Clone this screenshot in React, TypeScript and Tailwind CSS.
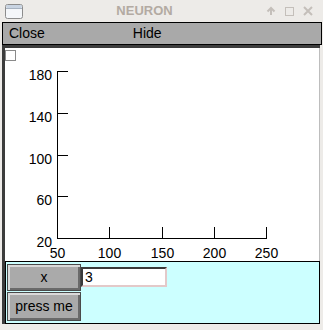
const yTicks = [
  { v: "180", y: 71.5 },
  { v: "140", y: 113.5 },
  { v: "100", y: 155.5 },
  { v: "60", y: 196.5 },
  { v: "20", y: 238.5 },
];

const xTicks = [
  { v: "50", x: 57.5 },
  { v: "100", x: 109.5 },
  { v: "150", x: 162.5 },
  { v: "200", x: 214.5 },
  { v: "250", x: 266.5 },
];

function TitleBar() {
  return (
    <div className="flex h-[22px] items-center">
      <svg width="18" height="15" viewBox="0 0 18 15" className="ml-[5px] shrink-0">
        <rect x="0.5" y="0.5" width="17" height="14" rx="2" fill="#f4f6f9" stroke="#8c8c8c" />
        <rect x="1" y="1" width="16" height="3" rx="1.5" fill="#c9d4e2" />
        <line x1="1" y1="4.5" x2="17" y2="4.5" stroke="#a7b2c0" />
      </svg>
      <div className="flex-1 text-center text-[13px] font-bold leading-[22px] text-[#b3aaa2]">NEURON</div>
      <div className="mr-[10px] flex items-center gap-[9px] text-[#c4bfba]">
        <svg width="10" height="10" viewBox="0 0 10 10">
          <path d="M5 9V2M1.5 5.5L5 2l3.5 3.5" fill="none" stroke="currentColor" strokeWidth="2" />
        </svg>
        <svg width="9" height="9" viewBox="0 0 9 9">
          <rect x="0.5" y="0.5" width="8" height="8" fill="none" stroke="currentColor" />
        </svg>
        <svg width="10" height="10" viewBox="0 0 10 10">
          <path d="M1 1l8 8M9 1l-8 8" fill="none" stroke="currentColor" strokeWidth="2" />
        </svg>
      </div>
    </div>
  );
}

function MotifButton({ label, h }: { label: string; h: string }) {
  return (
    <button
      className={`flex w-[74px] ${h} items-center justify-center border border-[#4a4a4a] bg-[#aaaaaa] text-[14px] text-black shadow-[inset_2px_2px_0_#dadada,inset_-2px_-2px_0_#6a6a6a]`}
    >
      {label}
    </button>
  );
}

export default function App() {
  return (
    <div className="h-[330px] w-[323px] overflow-hidden bg-[#edebe8] font-['Liberation_Sans',Arial,sans-serif]">
      <TitleBar />

      {/* menu bar */}
      <div className="ml-[2px] flex h-[23px] w-[320px] border border-black bg-[#a9a9a9] text-[14px] leading-[21px] text-black">
        <span className="ml-[6px]">Close</span>
        <span className="ml-[88px]">Hide</span>
      </div>

      <div className="ml-[2px] w-[318px] border-l-[3px] border-t-[3px] border-[#3c3c3c]">
        {/* graph canvas */}
        <div className="relative h-[213px] border-r border-[#bdbdbd] bg-white">
          <div className="absolute left-0 top-[2px] h-[11px] w-[11px] border border-[#8a8a8a] bg-white" />
          <svg width="313" height="213" className="block">
            <g transform="translate(-5,-48)" fontFamily="Liberation Sans, Arial, sans-serif" fontSize="14" fill="black">
              <line x1="57.5" y1="71" x2="57.5" y2="239" stroke="black" />
              <line x1="57" y1="238.5" x2="267" y2="238.5" stroke="black" />
              {yTicks.map((t) => (
                <g key={t.v}>
                  <line x1="57" y1={t.y} x2="68" y2={t.y} stroke="black" />
                  <text x="52" y={t.y + 8} textAnchor="end">
                    {t.v}
                  </text>
                </g>
              ))}
              {xTicks.map((t) => (
                <g key={t.v}>
                  <line x1={t.x} y1="227" x2={t.x} y2="238.5" stroke="black" />
                  <text x={t.x} y="258" textAnchor="middle">
                    {t.v}
                  </text>
                </g>
              ))}
            </g>
          </svg>
        </div>

        {/* control panel */}
        <div className="h-[63px] border border-black bg-[#ccffff] pl-[1px] pt-[2px]">
          <div className="flex items-start">
            <MotifButton label="x" h="h-[27px]" />
            <div className="mt-[3px] h-[20px] w-[86px] border-2 border-b-[#e3c9c9] border-l-[#3a3a3a] border-r-[#e3c9c9] border-t-[#3a3a3a] bg-white pl-[2px] text-[14px] leading-[16px] text-black">
              3
            </div>
          </div>
          <div className="mt-[1px]">
            <MotifButton label="press me" h="h-[29px]" />
          </div>
        </div>
      </div>
    </div>
  );
}
